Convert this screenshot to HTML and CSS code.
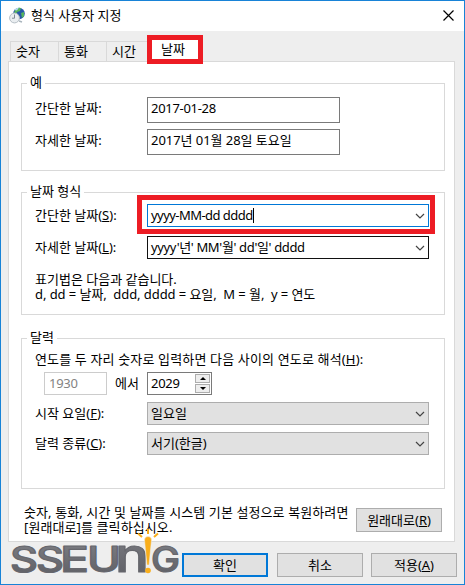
FILE: index.html
```html
<!DOCTYPE html>
<html lang="ko">
<head>
    <meta charset="UTF-8">
    <meta name="viewport" content="width=device-width, initial-scale=1.0">
    <title>형식 사용자 지정</title>
    <link rel="stylesheet" href="styles.css">
</head>
<body>
    <div class="window">
        <header class="titlebar">
            <svg class="app-icon" width="17" height="17" viewBox="0 0 17 17">
                <circle cx="10" cy="6.5" r="5.800" fill="#2558a8"/>
                <path d="M6 3q3-3 6-2l-1 3-3 1-1 3-2-1zM12 6l3-1v4l-2 2z" fill="#55b45c"/>
                <path d="M5 3q2-2.500 5-2.500l-2 3z" fill="#b8d8f0"/>
                <circle cx="5.500" cy="11" r="4.900" fill="#e9edf0" stroke="#b5bec5"/>
                <path d="M5.500 7.500v3.700h-2.500" fill="none" stroke="#7d8a94"/>
                <path d="M10 14l3 1" stroke="#a9b5bd" stroke-width="1.500"/>
            </svg>
            <h1>형식 사용자 지정</h1>
            <svg class="close" width="11" height="11" viewBox="0 0 11 11">
                <path d="M.5.5l10 10M10.500.5l-10 10" stroke="#000" stroke-width="1.200"/>
            </svg>
        </header>

        <nav class="tabs">
            <a class="tab">숫자</a>
            <a class="tab">통화</a>
            <a class="tab">시간</a>
            <a class="tab active">날짜</a>
        </nav>

        <main class="panel">
            <section class="group example">
                <h2>예</h2>
                <div class="row">
                    <label>간단한 날짜:</label>
                    <div class="field readonly latin">2017-01-28</div>
                </div>
                <div class="row">
                    <label>자세한 날짜:</label>
                    <div class="field readonly long-date">2017년 01월 28일 토요일</div>
                </div>
            </section>

            <section class="group formats">
                <h2>날짜 형식</h2>
                <div class="row">
                    <label>간단한 날짜(<u>S</u>):</label>
                    <div class="field combo focused"><span class="pattern">yyyy-MM-dd dddd</span><i class="caret"></i>
                        <svg class="arrow" width="10" height="6" viewBox="0 0 10 6"><path d="M1 1l4 4 4-4"/></svg>
                    </div>
                    <div class="mark mark-field"></div>
                </div>
                <div class="row">
                    <label>자세한 날짜(<u>L</u>):</label>
                    <div class="field combo dark"><span class="pattern-long">yyyy'년' MM'월' dd'일' dddd</span>
                        <svg class="arrow" width="10" height="6" viewBox="0 0 10 6"><path d="M1 1l4 4 4-4"/></svg>
                    </div>
                </div>
                <p class="hint">표기법은 다음과 같습니다.<br><span class="legend">d, dd = 날짜,&nbsp; ddd, dddd = 요일,&nbsp; M = 월,&nbsp; y = 연도</span></p>
            </section>

            <section class="group calendar">
                <h2>달력</h2>
                <p class="range-label">연도를 두 자리 숫자로 입력하면 다음 사이의 연도로 해석(<u>H</u>):</p>
                <div class="row range">
                    <div class="field year disabled latin">1930</div>
                    <span class="from">에서</span>
                    <div class="field spinner latin">2029
                        <div class="spin">
                            <span><svg width="6" height="3" viewBox="0 0 6 3"><path d="M0 3l3-3 3 3z"/></svg></span>
                            <span><svg width="6" height="3" viewBox="0 0 6 3"><path d="M0 0l3 3 3-3z"/></svg></span>
                        </div>
                    </div>
                </div>
                <div class="row">
                    <label>시작 요일(<u>F</u>):</label>
                    <div class="field combo select">일요일
                        <svg class="arrow" width="10" height="6" viewBox="0 0 10 6"><path d="M1 1l4 4 4-4"/></svg>
                    </div>
                </div>
                <div class="row">
                    <label>달력 종류(<u>C</u>):</label>
                    <div class="field combo select">서기(한글)
                        <svg class="arrow" width="10" height="6" viewBox="0 0 10 6"><path d="M1 1l4 4 4-4"/></svg>
                    </div>
                </div>
            </section>

            <section class="restore">
                <p>숫자, 통화, 시간 및 날짜를 시스템 기본 설정으로 복원하려면<br>[원래대로]를 클릭하십시오.</p>
                <button>원래대로(<u>R</u>)</button>
            </section>
        </main>

        <footer class="actions">
            <button class="primary">확인</button>
            <button>취소</button>
            <button>적용(<u>A</u>)</button>
        </footer>

        <div class="mark mark-tab"></div>

        <svg class="logo" width="172" height="50" viewBox="0 0 172 50">
            <defs>
                <linearGradient id="metal" x1="0" y1="0" x2="0" y2="1">
                    <stop offset="0" stop-color="#808187"/>
                    <stop offset="1" stop-color="#5b5c62"/>
                </linearGradient>
            </defs>
            <g class="logo-text">
                <text x="0" y="43" textLength="28" lengthAdjust="spacingAndGlyphs">S</text>
                <text x="26" y="43" textLength="28" lengthAdjust="spacingAndGlyphs">S</text>
                <text x="50" y="43" textLength="29" lengthAdjust="spacingAndGlyphs">E</text>
                <text x="77" y="43" textLength="34" lengthAdjust="spacingAndGlyphs">U</text>
                <text class="arch" x="105" y="43" textLength="34" lengthAdjust="spacingAndGlyphs">n</text>
                <text x="141" y="43" textLength="29" lengthAdjust="spacingAndGlyphs">G</text>
            </g>
            <path d="M134.500 11q0-3.500 3.500-3.500t3.500 3.500l-2.500 25h-2z" fill="#f9ae1b" stroke="#eee" stroke-width=".5"/>
            <circle cx="138" cy="41.500" r="2.800" fill="#f9ae1b"/>
            <path d="M138 0v5M128 4.500l4 3.500M148 4.500l-4 3.500" stroke="#f9ae1b" stroke-width="2"/>
        </svg>
    </div>
</body>
</html>
```
FILE: styles.css
```css
* {
    margin: 0;
    padding: 0;
    box-sizing: border-box;
}
body {
    font: 13px/15px "Noto Sans", "Noto Sans CJK KR", sans-serif;
    color: #000;
}
.window {
    position: relative;
    width: 465px;
    height: 585px;
    border: 1px solid #1883d7;
    background: #eee;
    overflow: hidden;
    white-space: nowrap;
}
.titlebar {
    display: flex;
    align-items: center;
    height: 30px;
    padding: 0 10px 2px 8px;
    background: #fff;
}
.titlebar h1 {
    flex: 1;
    margin-left: 5px;
    font-size: 13px;
    font-weight: normal;
}
.tabs {
    display: flex;
    align-items: flex-end;
    height: 30px;
    padding-left: 9px;
}
.tab {
    width: 48px;
    height: 20px;
    padding: 2px 0 0 5px;
    border: 1px solid #d9d9d9;
    border-width: 1px 0 0 1px;
}
.tab.active {
    height: 22px;
    margin-left: -3px;
    padding-left: 9px;
    background: #fff;
}
.panel {
    width: 447px;
    height: 481px;
    margin-left: 7px;
    padding: 21px 9px 0 12px;
    border: 1px solid #d9d9d9;
    background: #fff;
}
.group {
    position: relative;
    width: 424px;
    border: 1px solid #d9d9d9;
    padding-left: 13px;
}
.group h2 {
    position: absolute;
    top: -9px;
    left: 5px;
    padding: 0 3px;
    background: #fff;
    font-size: 13px;
    font-weight: normal;
}
.row {
    position: relative;
    display: flex;
    align-items: flex-start;
}
label {
    width: 112px;
    padding-top: 4px;
}
.field {
    position: relative;
    height: 23px;
    padding: 3px 0 0 3px;
    border: 1px solid #7a7a7a;
    background: #fff;
}
.readonly {
    width: 193px;
    height: 26px;
}
.combo {
    width: 282px;
}
.focused {
    border-color: #0078d7;
}
.dark {
    border-color: #111;
}
.select {
    border-color: #adadad;
    background: #e1e1e1;
}
.latin {
    letter-spacing: -0.300px;
}
.pattern {
    letter-spacing: -0.550px;
}
.pattern-long {
    letter-spacing: -0.350px;
}
.long-date {
    letter-spacing: -0.050px;
}
.caret {
    display: inline-block;
    width: 1px;
    height: 15px;
    background: #000;
    vertical-align: top;
}
.arrow {
    position: absolute;
    top: 8px;
    right: 3px;
    fill: none;
    stroke: #444;
    stroke-width: 1.200;
}
.example {
    height: 88px;
    padding-top: 13px;
}
.example .row {
    height: 32px;
}
.formats {
    height: 123px;
    margin-top: 21px;
    padding-top: 11px;
}
.formats .row {
    height: 32px;
}
.hint {
    margin-top: 4px;
}
.legend {
    letter-spacing: -0.070px;
}
.calendar {
    height: 151px;
    margin-top: 23px;
    padding-top: 13px;
}
.range-label {
    height: 20px;
    letter-spacing: 0.150px;
}
.calendar .row {
    height: 30px;
}
.range {
    padding-left: 9px;
}
.year {
    width: 63px;
    padding-left: 4px;
}
.disabled {
    border-color: #ccc;
    color: #838383;
}
.from {
    width: 40px;
    padding: 4px 0 0 8px;
}
.spinner {
    width: 65px;
}
.spin {
    position: absolute;
    top: 0;
    right: 0;
    display: grid;
    gap: 1px;
    padding: 1px;
    background: #fff;
}
.spin span {
    display: flex;
    align-items: center;
    justify-content: center;
    width: 15px;
    height: 9px;
    border: 1px solid #adadad;
    background: #eee;
}
.restore {
    display: flex;
    margin: 16px 0 0 3px;
}
.restore p {
    width: 332px;
    letter-spacing: 0.100px;
}
button {
    width: 86px;
    height: 24px;
    border: 1px solid #adadad;
    background: #e1e1e1;
    color: #000;
    font: inherit;
}
.restore button {
    flex: none;
    margin-top: 3px;
}
.actions {
    display: flex;
    gap: 8px;
    padding: 11px 0 0 181px;
}
.primary {
    margin-right: 1px;
    border: 2px solid #0078d7;
}
.mark {
    position: absolute;
    border: 5px solid #ed1c24;
    pointer-events: none;
}
.mark-tab {
    top: 34px;
    left: 146px;
    width: 56px;
    height: 29px;
}
.mark-field {
    top: -9px;
    left: 102px;
    width: 298px;
    height: 39px;
}
.logo {
    position: absolute;
    top: 528px;
    left: 9px;
}
.logo-text {
    font: 500 36px Inter, sans-serif;
    fill: url(#metal);
    stroke: #66676d;
    stroke-width: 1.200;
    stroke-linejoin: round;
}
.arch {
    font-size: 47px;
}
```
